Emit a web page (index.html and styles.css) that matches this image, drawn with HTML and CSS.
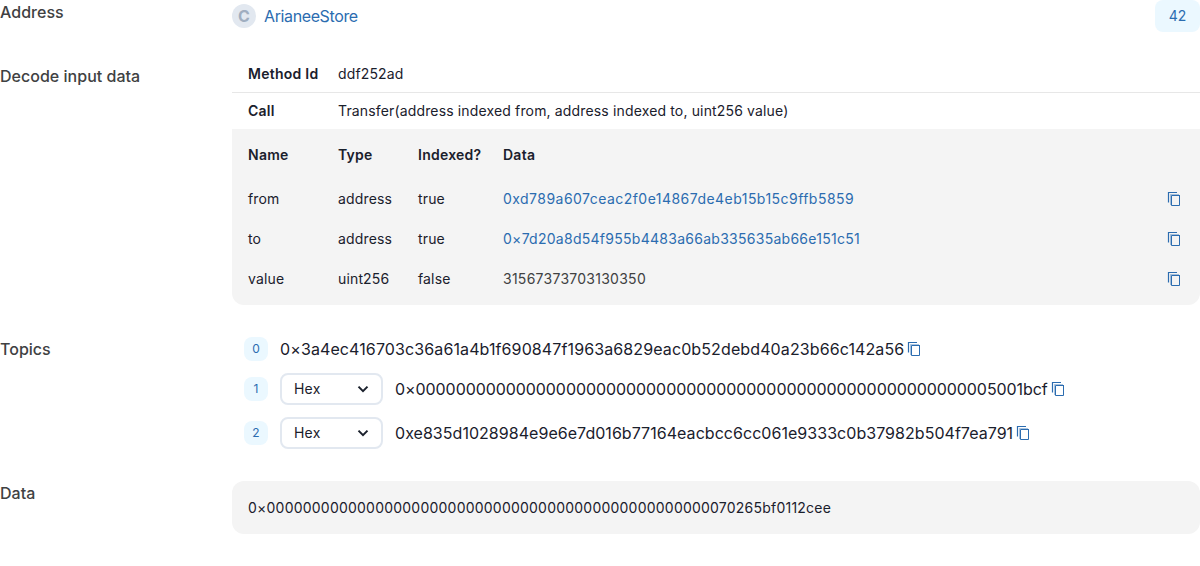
FILE: index.html
```html
<!DOCTYPE html>
<html lang="en">
<head>
<meta charset="utf-8">
<title>Transaction log</title>
<link rel="stylesheet" href="styles.css">
</head>
<body>
<svg class="defs" width="0" height="0">
  <symbol id="copy" viewBox="0 0 20 20">
    <path d="M4.5 13.6V3.5H13" fill="none" stroke="currentColor" stroke-width="1.2"/>
    <path d="M6.5 16V5.5H15" fill="none" stroke="currentColor" stroke-opacity=".4"/>
    <path d="M15.5 6V16.5H7.5V6.5H15" fill="none" stroke="currentColor" stroke-width="1"/>
  </symbol>
  <symbol id="chevron" viewBox="0 0 24 24">
    <path d="M6.6 9.2L12 14.6l5.4-5.4" fill="none" stroke="currentColor" stroke-width="2.4"/>
  </symbol>
</svg>
<main class="log">
  <div class="label">Address</div>
  <div class="address">
    <span class="avatar">C</span>
    <a class="link name">ArianeeStore</a>
    <span class="index">42</span>
  </div>

  <div class="label">Decode input data</div>
  <div class="decoded">
    <div class="summary"><b>Method Id</b><span>ddf252ad</span></div>
    <div class="summary"><b>Call</b><span>Transfer(address indexed from, address indexed to, uint256 value)</span></div>
    <div class="params">
      <b>Name</b><b>Type</b><b>Indexed?</b><b class="head-data">Data</b>
      <span>from</span><span>address</span><span>true</span>
      <div class="value"><a class="link from">0xd789a607ceac2f0e14867de4eb15b15c9ffb5859</a><svg class="copy"><use href="#copy"/></svg></div>
      <span>to</span><span>address</span><span>true</span>
      <div class="value"><a class="link to">0×7d20a8d54f955b4483a66ab335635ab66e151c51</a><svg class="copy"><use href="#copy"/></svg></div>
      <span>value</span><span>uint256</span><span>false</span>
      <div class="value"><span class="amount">31567373703130350</span><svg class="copy"><use href="#copy"/></svg></div>
    </div>
  </div>

  <div class="label">Topics</div>
  <div class="topics">
    <div class="topic">
      <span class="badge">0</span>
      <div class="hash"><span class="signature">0×3a4ec416703c36a61a4b1f690847f1963a6829eac0b52debd40a23b66c142a56</span><svg class="copy"><use href="#copy"/></svg></div>
    </div>
    <div class="topic">
      <span class="badge">1</span>
      <div class="select">Hex<svg class="chevron"><use href="#chevron"/></svg></div>
      <div class="hash"><span class="padded">0×0000000000000000000000000000000000000000000000000000000005001bcf</span><svg class="copy"><use href="#copy"/></svg></div>
    </div>
    <div class="topic">
      <span class="badge">2</span>
      <div class="select">Hex<svg class="chevron"><use href="#chevron"/></svg></div>
      <div class="hash"><span class="full">0xe835d1028984e9e6e7d016b77164eacbcc6cc061e9333c0b37982b504f7ea791</span><svg class="copy"><use href="#copy"/></svg></div>
    </div>
  </div>

  <div class="label">Data</div>
  <div class="data">0×0000000000000000000000000000000000000000000000000070265bf0112cee</div>
</main>
</body>
</html>
```
FILE: styles.css
```css
* { box-sizing: border-box; }
body {
  margin: 0;
  font: 400 16px/24px Inter, sans-serif;
  color: #1a202c;
  background: #fff;
}
.defs { display: none; }
.log {
  display: grid;
  grid-template-columns: 200px minmax(0, 1fr);
  gap: 32px;
}
.label { font-weight: 500; color: #404142; letter-spacing: 0.02px; }
.link { color: #2b6cb0; }
.address { display: flex; align-items: center; height: 32px; }
.name { letter-spacing: -0.38px; }
.avatar {
  width: 24px;
  height: 24px;
  margin-right: 8px;
  border-radius: 50%;
  background: #e2e8f0;
  color: #a0aec0;
  font-weight: 700;
  text-align: center;
}
.index {
  margin-left: auto;
  width: 45px;
  height: 32px;
  border-radius: 8px;
  background: #ebf8ff;
  color: #2b6cb0;
  font-size: 14px;
  line-height: 32px;
  text-align: center;
}
.decoded { font-size: 14px; line-height: 20px; letter-spacing: 0.15px; }
.decoded b { font-weight: 600; letter-spacing: 0.25px; }
.summary {
  display: grid;
  grid-template-columns: 70px 1fr;
  column-gap: 20px;
  padding: 8px 16px;
  white-space: nowrap;
}
.summary:first-child { padding-top: 0; border-bottom: 1px solid #e7e7e7; }
.params {
  display: grid;
  grid-template-columns: 70px 60px 65px minmax(0, 1fr);
  gap: 20px;
  padding: 16px;
  border-radius: 0 0 12px 12px;
  background: #f4f4f4;
}
.head-data { margin-bottom: 4px; }
.value { display: flex; justify-content: space-between; color: #404142; }
.from { letter-spacing: 0.46px; }
.to { letter-spacing: 0.27px; }
.amount { letter-spacing: 0.26px; }
.copy { width: 20px; height: 20px; flex: none; color: #2b6cb0; }
.topics { display: grid; gap: 12px; padding-left: 12px; }
.topic { display: flex; align-items: center; gap: 12px; }
.badge {
  width: 24px;
  height: 24px;
  border-radius: 8px;
  background: #ebf8ff;
  color: #2b6cb0;
  font-size: 12px;
  text-align: center;
}
.select {
  display: flex;
  align-items: center;
  justify-content: space-between;
  width: 103px;
  height: 32px;
  padding: 0 8px 0 12px;
  border: 2px solid #e2e8f0;
  border-radius: 8px;
  font-size: 14px;
  letter-spacing: 0.2px;
}
.chevron { width: 20px; height: 20px; }
.hash { display: flex; align-items: center; }
.signature { letter-spacing: 0.11px; }
.padded { letter-spacing: -0.07px; }
.full { letter-spacing: 0.04px; }
.data {
  padding: 16px;
  border-radius: 12px;
  background: #f4f4f4;
  font-size: 14px;
  line-height: 21px;
  letter-spacing: 0.22px;
}
```
